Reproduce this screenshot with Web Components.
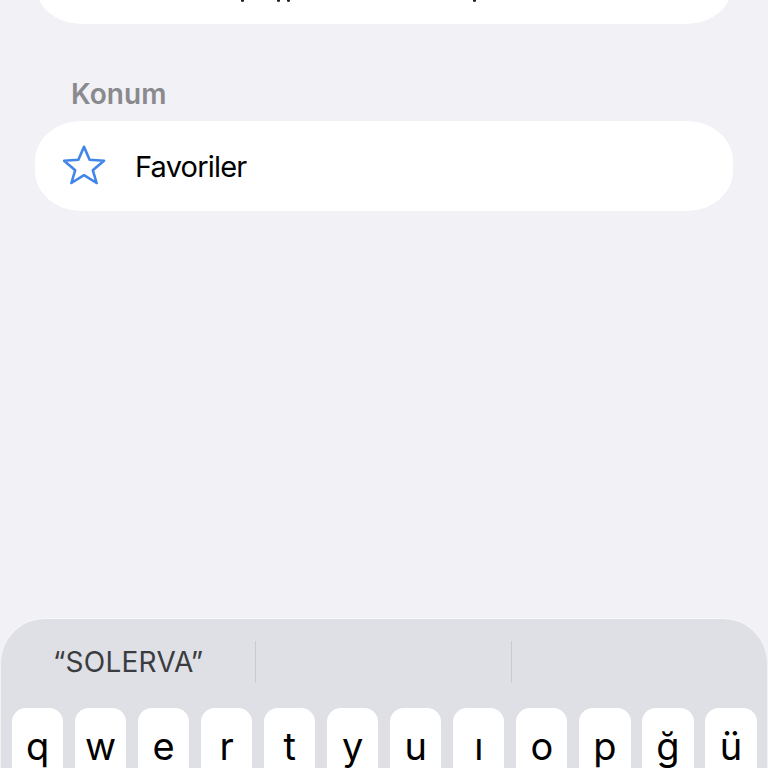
<!doctype html>
<html><head><meta charset="utf-8"><style>
html,body{margin:0;padding:0;background:#f1f1f6}
body{width:768px;height:768px;overflow:hidden;display:flex;flex-direction:column;font-family:Inter,"Liberation Sans",sans-serif}
</style></head><body>
<top-card></top-card>
<section-label>Konum</section-label>
<list-row label="Favoriler"></list-row>
<key-board suggestion="“SOLERVA”" keys="q w e r t y u ı o p ğ ü"></key-board>
<script>
customElements.define('top-card',class extends HTMLElement{constructor(){super();this.attachShadow({mode:'open'}).innerHTML=`<style>
:host{display:block;height:90px;margin:-66px 35px 0;background:#fff;border-radius:46px/40px;flex:none;position:relative}
i{position:absolute;top:66px;height:2px;width:3px;background:#222;border-radius:0 0 2px 2px}
</style><i style="left:206px"></i><i style="left:242px"></i><i style="left:252px"></i><i style="left:438px"></i>`}});
customElements.define('section-label',class extends HTMLElement{constructor(){super();this.attachShadow({mode:'open'}).innerHTML=`<style>
:host{display:block;flex:none;margin:53px 0 0 71px;height:44px;line-height:34px;font-size:28px;font-weight:600;color:#8a8a8e;letter-spacing:.1px}
</style><slot></slot>`}});
customElements.define('list-row',class extends HTMLElement{constructor(){super();this.attachShadow({mode:'open'}).innerHTML=`<style>
:host{display:flex;flex:none;align-items:center;height:90px;margin:0 35px;background:#fff;border-radius:46px/40px;padding-left:28px;box-sizing:border-box}
svg{width:44px;height:42px;flex:none}
span{margin-left:28px;font-size:29px;color:#000;letter-spacing:-.8px}
</style><svg viewBox="0 0 44 42"><path d="M21 1.8 L26.6 14.8 L41 15.8 L29.8 25.2 L33.6 38 L21 30.2 L8.4 38 L12.2 25.2 L1 15.8 L15.4 14.8 Z" fill="none" stroke="#4285e8" stroke-width="2.6" stroke-linejoin="round"/></svg><span>${this.getAttribute('label')}</span>`}});
customElements.define('key-board',class extends HTMLElement{constructor(){super();
const keys=this.getAttribute('keys').split(' ').map(k=>`<div class="k"><b>${k}</b></div>`).join('');
this.attachShadow({mode:'open'}).innerHTML=`<style>
:host{display:flex;flex-direction:column;flex:none;margin:auto 1px 0;height:149px;box-sizing:border-box;background:#dee0e5;border-radius:44px 44px 0 0;overflow:hidden;box-shadow:0 -1px 1px #f8f8fb;color:#000}
.s{display:grid;grid-template-columns:255px 256px 1fr;height:89px;flex:none;padding-top:22px;box-sizing:border-box}
.s div{height:42px;border-right:1px solid #c9cbd0;font-size:28px;line-height:42px;color:#3a3c40;padding-left:52px;box-sizing:border-box;letter-spacing:.25px}
.s div:last-child{border:0}
.r{display:flex;gap:11.8px;padding:0 10.5px 0 11px}
.k{flex:1;height:80px;background:#fff;border-radius:14px;text-align:center;font-size:38px;line-height:76px}
.k b{font-weight:400}
</style><div class="s"><div>${this.getAttribute('suggestion')}</div><div></div><div></div></div><div class="r">${keys}</div>`}});
</script>
</body></html>
